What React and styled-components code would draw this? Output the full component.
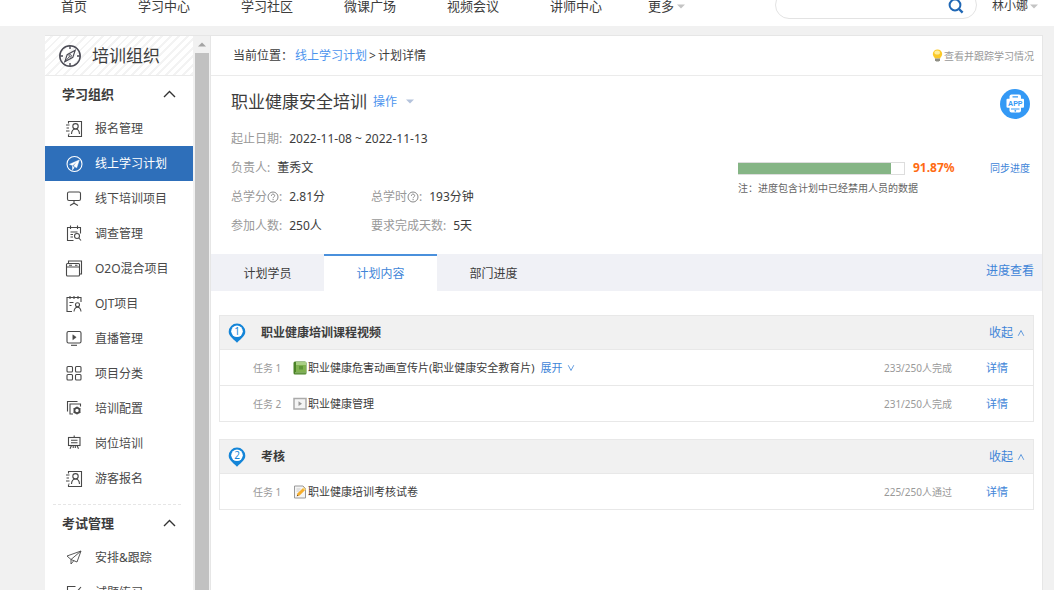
import React, { useState } from "react";
import styled, { createGlobalStyle, css } from "styled-components";

const GlobalStyle = createGlobalStyle`
  * {
    box-sizing: border-box;
  }

  body {
    margin: 0;
    background: #f1f1f1;
    color: #3c3c3c;
    font-family: "Noto Sans", "Noto Sans CJK SC", sans-serif;
    font-size: 12px;
    line-height: 20px;
  }

  ul,
  h1,
  h2,
  h3,
  p,
  dl,
  dd {
    margin: 0;
    padding: 0;
    list-style: none;
  }

  button {
    padding: 0;
    border: 0;
    background: none;
    color: inherit;
    font: inherit;
    cursor: pointer;
  }

  a {
    color: inherit;
    text-decoration: none;
  }

  svg {
    display: block;
    flex: none;
  }
`;

const Page = styled.div`
  display: flex;
  flex-direction: column;
  height: 100vh;
  overflow: hidden;
`;

/* 상단 메뉴 */
const Header = styled.header`
  display: flex;
  align-items: center;
  flex: none;
  height: 66px;
  margin-top: -40px;
  padding: 26px 16px 0 61px;

  background: #fff;
`;

const Nav = styled.nav`
  display: flex;
  gap: 51px;

  font-size: 13px;
  line-height: 14px;
  white-space: nowrap;
`;

const MoreButton = styled.button`
  display: flex;
  align-items: center;
  gap: 3px;
  margin-left: -5px;
`;

const SearchForm = styled.form`
  display: flex;
  align-items: center;
  width: 202px;
  height: 28px;
  margin: 0 15px 2px auto;
  padding: 0 12px 0 14px;

  border: 1px solid #e3e3e3;
  border-radius: 14px;
`;

const SearchInput = styled.input`
  flex: 1;
  min-width: 0;

  border: 0;
  outline: none;
  font: inherit;
`;

const UserButton = styled.button`
  display: flex;
  align-items: center;
  gap: 2px;

  line-height: 14px;
`;

const Body = styled.div`
  display: flex;
  flex: 1;
  min-height: 0;
  margin: 9px 11px 0 45px;

  border-top: 1px solid #e6e6e6;
`;

/* 왼쪽 메뉴 */
const Sidebar = styled.aside`
  flex: none;
  width: 148px;
  overflow: hidden;

  background: #fff;
`;

const SidebarHead = styled.h2`
  display: flex;
  align-items: center;
  gap: 10px;
  height: 40px;
  padding-left: 13px;

  border-bottom: 1px solid #ebebeb;
  background: repeating-linear-gradient(
    135deg,
    #fff 0 4px,
    #f3f3f3 4px 6px
  );
  font-size: 17px;
  font-weight: normal;
`;

const MenuGroup = styled.section`
  padding-bottom: 9px;
`;

const GroupButton = styled.button`
  display: flex;
  align-items: center;
  justify-content: space-between;
  width: 100%;
  height: 35px;
  padding: 0 17px;

  font-size: 13px;
  font-weight: bold;
`;

const Divider = styled.hr`
  height: 0;
  margin: -1px 12px 0 8px;

  border: 0;
  border-top: 1px dashed #e6e6e6;
`;

const MenuLink = styled.a`
  display: flex;
  align-items: center;
  gap: 12px;
  height: 35px;
  padding-left: 20px;

  color: #484848;

  ${({ $active }) =>
    $active &&
    css`
      background: #2e6fba;
      color: #fff;
    `}
`;

const ScrollTrack = styled.div`
  display: flex;
  flex-direction: column;
  flex: none;
  width: 17px;
  padding: 0 1px 0 2px;

  background: #f1f1f1;
`;

const ScrollArrow = styled.div`
  display: flex;
  align-items: center;
  justify-content: center;
  height: 17px;
`;

const ScrollThumb = styled.div`
  flex: 1;

  background: #c1c1c1;
`;

/* 본문 */
const Main = styled.main`
  flex: 1;
  min-width: 0;

  border: solid #e6e6e6;
  border-width: 0 1px;
  background: #fff;
`;

const Breadcrumb = styled.div`
  display: flex;
  align-items: center;
  justify-content: space-between;
  height: 40px;
  padding: 0 8px 0 22px;

  border-bottom: 1px solid #ebebeb;
`;

const Crumbs = styled.nav`
  display: flex;
  gap: 2px;
`;

const TrackLink = styled.a`
  display: flex;
  align-items: center;
  gap: 1px;

  color: #999;
  font-size: 10px;
`;

const BlueLink = styled.a`
  color: ${({ $light }) => ($light ? "#4c94ee" : "#3f85d8")};
  font-size: ${({ $size }) => $size || 12}px;
`;

const Summary = styled.section`
  display: flex;
  padding: 13px 12px 14px 20px;
`;

const Info = styled.div`
  flex: 1;
`;

const TitleRow = styled.div`
  display: flex;
  align-items: center;
  gap: 6px;
  height: 25px;
  margin-bottom: 10px;
`;

const Title = styled.h1`
  font-size: 17px;
  font-weight: normal;
`;

const ActionButton = styled.button`
  display: flex;
  align-items: center;
  gap: 9px;

  color: #4c94ee;
`;

const InfoList = styled.dl`
  display: grid;
  grid-template-columns: 140px auto;
  grid-auto-rows: 29px;
  align-items: center;
`;

const InfoItem = styled.div`
  display: flex;
  gap: 7px;
  grid-column: ${({ $wide }) => ($wide ? "1 / -1" : "auto")};

  white-space: nowrap;
`;

const InfoLabel = styled.dt`
  display: flex;
  align-items: center;

  color: #999;
`;

const Status = styled.div`
  display: flex;
  flex-direction: column;
  width: 292px;
`;

const AppButton = styled.button`
  align-self: flex-end;
  width: 30px;
  height: 30px;
  margin-bottom: 39px;
`;

const ProgressRow = styled.div`
  display: flex;
  align-items: center;
  height: 20px;
`;

const ProgressBar = styled.div`
  width: 167px;
  height: 13px;
  margin-right: 8px;

  border: 1px solid #ddd;
  border-left: 0;
`;

const ProgressFill = styled.div`
  height: 11px;

  background: #85b585;
`;

const Percent = styled.strong`
  flex: 1;

  color: #ff6b12;
  font-size: 12px;
`;

const Note = styled.p`
  color: #666;
  font-size: 10px;
`;

const TabBar = styled.div`
  display: flex;
  align-items: stretch;
  height: 37px;
  padding-right: 8px;

  background: #f0f1f6;
`;

const Tab = styled.button`
  width: 113px;

  border-top: 2px solid transparent;

  ${({ $active }) =>
    $active &&
    css`
      border-top-color: #4a90dc;
      background: #fff;
      color: #3f85d8;
    `}
`;

const TabExtra = styled.div`
  margin: 7px 0 0 auto;
`;

const Chapters = styled.div`
  display: flex;
  flex-direction: column;
  gap: 17px;
  padding: 24px 8px 24px;
`;

const Chapter = styled.section`
  border: 1px solid #e8e8e8;
`;

const ChapterHead = styled.div`
  display: flex;
  align-items: center;
  height: 33px;
  padding: 0 8px;

  background: #f1f1f1;
`;

const ChapterTitle = styled.h3`
  flex: 1;
  margin-left: 15px;

  font-size: 12px;
`;

const FoldButton = styled.button`
  display: flex;
  align-items: center;
  gap: 4px;

  color: #3f85d8;
  font-size: ${({ $small }) => ($small ? 11 : 12)}px;
`;

const Task = styled.li`
  display: flex;
  align-items: center;
  height: 36px;
  padding: 0 25px 0 33px;

  border-top: 1px solid #e8e8e8;
  font-size: 11px;
`;

const TaskNo = styled.span`
  width: 40px;

  color: #999;
  font-size: 10px;
`;

const TaskName = styled.span`
  display: flex;
  align-items: center;
  gap: 1px;
  margin-right: 6px;
`;

const TaskCount = styled.span`
  margin: 0 34px 0 auto;

  color: #999;
  font-size: 10px;
`;

const Caret = ({ color = "#c4c4c4", up }) => (
  <svg width="8" height="5" viewBox="0 0 8 5" fill={color}>
    <path d={up ? "M0 4.5L4 .5l4 4z" : "M0 .5h8l-4 4z"} />
  </svg>
);

const Chevron = ({ up, size = 8 }) => (
  <svg
    width={size}
    height={size}
    viewBox="0 0 8 8"
    fill="none"
    stroke="currentColor"
  >
    <path d={up ? "M1.2 6.8L4 1.5l2.8 5.3" : "M1.2 1.2L4 6.5l2.8-5.3"} strokeWidth=".8" />
  </svg>
);

const GroupArrow = ({ up }) => (
  <svg width="13" height="8" viewBox="0 0 13 8" fill="none" stroke="#333">
    <path d={up ? "M1 7l5.5-5.5L12 7" : "M1 1l5.5 5.5L12 1"} strokeWidth="1.4" />
  </svg>
);

const SearchIcon = () => (
  <svg width="16" height="17" viewBox="0 0 16 17" fill="none" stroke="#1f67b5">
    <circle cx="7" cy="8" r="5.4" strokeWidth="2" />
    <path d="M11 12l3.6 3.6" strokeWidth="2.4" />
  </svg>
);

const CompassIcon = () => (
  <svg width="24" height="24" viewBox="0 0 24 24" fill="none" stroke="#4b4b55">
    <circle cx="12" cy="12" r="10.2" strokeWidth="1.5" />
    <path d="M12 2v3M12 19v3M2 12h3M19 12h3" strokeWidth="1.4" />
    <path d="M17.2 6.2l-2.4 7.2-8 4.400 2.400-7.200z" strokeWidth="1.2" />
    <path d="M6.8 17.8l4.500-5" />
    <circle cx="12.2" cy="11.8" r="1.2" />
  </svg>
);

const BulbIcon = () => (
  <svg width="11" height="13" viewBox="0 0 11 13">
    <path
      d="M5.5.5A4.7 4.7 0 0 0 .8 5.1c0 2 1.5 2.9 2 4.4h5.4c.5-1.5 2-2.4 2-4.4A4.7 4.7 0 0 0 5.5.5z"
      fill="#fbc928"
    />
    <ellipse cx="5.2" cy="3.6" rx="2.8" ry="2" fill="#ffee9a" />
    <path d="M3 9.5h5v1.8L6.8 12.6H4.2L3 11.3z" fill="#8f8f85" />
  </svg>
);

const HelpIcon = () => (
  <svg width="12" height="12" viewBox="0 0 12 12" fill="none" stroke="#888">
    <circle cx="6" cy="6" r="5" />
    <path d="M4.4 4.8c0-2.300 3.300-2.200 3.300-.1 0 1.200-1.600 1.200-1.600 2.500M6.100 8v1.200" />
  </svg>
);

const AppIcon = () => (
  <svg width="30" height="30" viewBox="0 0 30 30">
    <circle cx="15" cy="15" r="15" fill="#3499f5" />
    <rect x="9.5" y="5.500" width="11.500" height="18" rx="2" fill="#fff" />
    <path d="M12.500 7.800h5.500M11 20h8.500" stroke="#3499f5" strokeWidth="1.200" />
    <circle cx="15.300" cy="21.800" r=".9" fill="#3499f5" />
    <rect x="6.500" y="9.800" width="17.500" height="9" rx="1" fill="#fff" />
    <text
      x="15.300"
      y="17"
      fill="#3499f5"
      fontFamily="Liberation Sans"
      fontSize="7"
      fontWeight="bold"
      textAnchor="middle"
    >
      APP
    </text>
  </svg>
);

const Pin = ({ no }) => (
  <svg width="18" height="20" viewBox="0 0 18 20">
    <path
      d="M9 .5a8.300 8.300 0 0 0-8.300 8.300c0 4.200 3.600 6.400 8.300 10.900 4.700-4.500 8.300-6.700 8.300-10.900A8.300 8.300 0 0 0 9 .5z"
      fill="#1485d8"
    />
    <circle cx="9" cy="8.300" r="5.800" fill="#fff" />
    <text
      x="9"
      y="12"
      fill="#1485d8"
      fontFamily="Noto Sans"
      fontSize="10"
      textAnchor="middle"
    >
      {no}
    </text>
  </svg>
);

const BookIcon = () => (
  <svg width="14" height="14" viewBox="0 0 14 14">
    <rect x=".5" y=".5" width="13" height="13" rx="1.500" fill="#4a8226" />
    <path d="M3 1h10v10H3z" fill="#7fb14f" />
    <path d="M2 11.800h11" stroke="#b9d79b" strokeWidth=".7" />
    <path d="M3 1h10v3H3z" fill="#a9cf85" />
    <rect x="6" y="5" width="4" height="3.500" fill="#5f9638" />
  </svg>
);

const VideoIcon = () => (
  <svg width="14" height="14" viewBox="0 0 14 14">
    <rect x="1" y="1.500" width="12" height="10.500" fill="#f4f4f4" stroke="#aaa" strokeWidth="1.500" />
    <path d="M5.500 4.300l3.500 2.400-3.500 2.400z" fill="#999" />
  </svg>
);

const PaperIcon = () => (
  <svg width="14" height="14" viewBox="0 0 14 14">
    <path d="M1.500 1h8.500l2.500 2.500V13h-11z" fill="#f5f5f5" stroke="#999" />
    <path d="M3.500 4h4M3.500 6h3" stroke="#ccc" />
    <path d="M3.800 11.200l.8-2.900 6-5.800 2 2.100-6 5.800z" fill="#f6ae2d" />
    <path d="M9.600 3.500l1.300-1.200 2 2.100-1.300 1.200z" fill="#f9d67c" />
    <path d="M3.800 11.200l.5-1.700 1.200 1.200z" fill="#6b4a2a" />
  </svg>
);

const taskIcons = {
  book: <BookIcon />,
  video: <VideoIcon />,
  paper: <PaperIcon />,
};

const contact = (
  <>
    <path d="M3.500 3.500V1.500h13v15h-13v-2" />
    <path d="M1 5h3.500M1.500 8h2.500M1 11h3.500M3.500 14h1" />
    <circle cx="10.500" cy="6.300" r="2.700" />
    <path d="M6.500 14c.2-3 1.800-5 4-5s3.800 2 4 5" />
  </>
);

const menuIcons = {
  contact,
  plan: (
    <>
      <circle cx="9.500" cy="9" r="7.500" />
      <path d="M14.300 5L4.500 9.300l3.100 1.200 4.300-3.700-3.200 4.300 3 1.700z" fill="currentColor" strokeWidth=".5" />
      <path d="M7.800 11v3l1.300-1.800" />
    </>
  ),
  board: (
    <>
      <rect x="2.500" y="2" width="13" height="8.500" rx="1.500" />
      <path d="M9 10.500v3M5 15.500l4-2.300 4 2.300" />
    </>
  ),
  survey: (
    <>
      <path d="M15.500 8.500V2.500h-13v13h6M5.500 .5v3.500M12.500 .5v3.500M5.500 7h7M5.500 9.500h2.500M5.500 12h2.500" />
      <circle cx="12" cy="11" r="2.500" />
      <path d="M13.800 13l2.200 2.500" />
    </>
  ),
  windows: (
    <>
      <rect x="1.500" y="3.500" width="13" height="12.500" rx="1" />
      <path d="M1.500 7h13M3.500 3.500v-2.500h13v13h-2M4 5.200h3M10 5.200h2.500" />
    </>
  ),
  ojt: (
    <>
      <path d="M7 16.500H2v-14h14V7M5 1v3M9 1v3M13 1v3M4.500 7.500h4M4.500 10.500h2" />
      <circle cx="12.500" cy="9.800" r="2" />
      <path d="M9 16.500c.3-2.700 1.500-4.200 3.500-4.200s3.200 1.500 3.500 4.200" />
    </>
  ),
  live: (
    <>
      <rect x="2" y="1.500" width="14" height="11.500" rx="1.500" />
      <path d="M7.800 4.800l3.400 2.500-3.400 2.500z" fill="currentColor" strokeWidth=".5" />
      <path d="M6 15.300h6" />
    </>
  ),
  grid: (
    <>
      <rect x="2" y="1.500" width="5.500" height="5.500" rx="1" />
      <rect x="10.500" y="1.500" width="5.500" height="5.500" rx="1" />
      <rect x="2" y="9.500" width="5.500" height="5.500" rx="1" />
      <rect x="10.500" y="9.500" width="5.500" height="5.500" rx="1" />
    </>
  ),
  config: (
    <>
      <path d="M2.500 11.500v-10h10M8 14H5V4h10.500V6.500" />
      <circle cx="12" cy="10.500" r="2.600" strokeWidth="1.800" />
      <path d="M12 6.500v1.500M12 13v1.500M8.500 8.500l1.300.8M14.200 11.700l1.300.8M8.500 12.500l1.300-.8M14.200 9.300l1.300-.8" />
    </>
  ),
  post: (
    <>
      <rect x="3.500" y="2.500" width="11.500" height="8" />
      <path d="M9.200 .5v2M6 5.300h6.500M6 7.800h6.500M6.500 10.500L5 13.800M12 10.500l1.500 3.300M8.200 10.500v2.500M10.300 10.500v2.500" />
    </>
  ),
  plane: (
    <path d="M16 2L2 7l4 3.500L16 2l-4 11-6-2.500M6 10.500V15l2.800-3.300" strokeWidth=".9" />
  ),
  edit: (
    <path d="M15.500 8v8.500h-13v-14h8M6 8l3 3 7-8" />
  ),
};

const MenuIcon = ({ name }) => (
  <svg
    width="18"
    height="18"
    viewBox="0 0 18 18"
    fill="none"
    stroke="currentColor"
    strokeWidth="1.1"
  >
    {menuIcons[name]}
  </svg>
);

const navList = ["首页", "学习中心", "学习社区", "微课广场", "视频会议", "讲师中心"];

const menuGroups = [
  {
    id: 1,
    name: "学习组织",
    items: [
      { icon: "contact", name: "报名管理" },
      { icon: "plan", name: "线上学习计划" },
      { icon: "board", name: "线下培训项目" },
      { icon: "survey", name: "调查管理" },
      { icon: "windows", name: "O2O混合项目" },
      { icon: "ojt", name: "OJT项目" },
      { icon: "live", name: "直播管理" },
      { icon: "grid", name: "项目分类" },
      { icon: "config", name: "培训配置" },
      { icon: "post", name: "岗位培训" },
      { icon: "contact", name: "游客报名" },
    ],
  },
  {
    id: 2,
    name: "考试管理",
    items: [
      { icon: "plane", name: "安排&跟踪" },
      { icon: "edit", name: "试题练习" },
    ],
  },
];

const infoList = [
  { label: "起止日期", value: "2022-11-08 ~ 2022-11-13", wide: true },
  { label: "负责人", value: "董秀文", wide: true },
  { label: "总学分", value: "2.81分", help: true },
  { label: "总学时", value: "193分钟", help: true },
  { label: "参加人数", value: "250人" },
  { label: "要求完成天数", value: "5天" },
];

const chapterList = [
  {
    id: 1,
    title: "职业健康培训课程视频",
    tasks: [
      {
        icon: "book",
        name: "职业健康危害动画宣传片(职业健康安全教育片)",
        count: "233/250人完成",
        expandable: true,
      },
      { icon: "video", name: "职业健康管理", count: "231/250人完成" },
    ],
  },
  {
    id: 2,
    title: "考核",
    tasks: [
      { icon: "paper", name: "职业健康培训考核试卷", count: "225/250人通过" },
    ],
  },
];

const TopBar = () => {
  const [keyword, setKeyword] = useState("");

  return (
    <Header>
      <Nav>
        {navList.map((name) => (
          <a href="#" key={name}>
            {name}
          </a>
        ))}
        <MoreButton>
          更多
          <Caret />
        </MoreButton>
      </Nav>
      <SearchForm onSubmit={(e) => e.preventDefault()}>
        <SearchInput
          aria-label="搜索"
          value={keyword}
          onChange={({ target }) => setKeyword(target.value)}
        />
        <button aria-label="搜索">
          <SearchIcon />
        </button>
      </SearchForm>
      <UserButton>
        林小娜
        <Caret />
      </UserButton>
    </Header>
  );
};

const Group = ({ group, current, onSelect }) => {
  const [open, setOpen] = useState(true);

  return (
    <MenuGroup>
      <GroupButton aria-expanded={open} onClick={() => setOpen(!open)}>
        {group.name}
        <GroupArrow up={open} />
      </GroupButton>
      {open &&
        group.items.map(({ icon, name }) => (
          <MenuLink
            href="#"
            key={name}
            $active={name === current}
            onClick={() => onSelect(name)}
          >
            <MenuIcon name={icon} />
            {name}
          </MenuLink>
        ))}
    </MenuGroup>
  );
};

const SideMenu = () => {
  const [current, setCurrent] = useState("线上学习计划");

  return (
    <>
      <Sidebar>
        <SidebarHead>
          <CompassIcon />
          培训组织
        </SidebarHead>
        {menuGroups.map((group, i) => (
          <React.Fragment key={group.id}>
            {i > 0 && <Divider />}
            <Group group={group} current={current} onSelect={setCurrent} />
          </React.Fragment>
        ))}
      </Sidebar>
      <ScrollTrack>
        <ScrollArrow>
          <Caret color="#a3a3a3" up />
        </ScrollArrow>
        <ScrollThumb />
      </ScrollTrack>
    </>
  );
};

const PlanSummary = () => {
  const progress = 91.87;

  return (
    <Summary>
      <Info>
        <TitleRow>
          <Title>职业健康安全培训</Title>
          <ActionButton>
            操作
            <Caret color="#b4c3dc" />
          </ActionButton>
        </TitleRow>
        <InfoList>
          {infoList.map(({ label, value, help, wide }) => (
            <InfoItem key={label} $wide={wide}>
              <InfoLabel>
                {label}
                {help && <HelpIcon />}:
              </InfoLabel>
              <dd>{value}</dd>
            </InfoItem>
          ))}
        </InfoList>
      </Info>
      <Status>
        <AppButton aria-label="APP">
          <AppIcon />
        </AppButton>
        <ProgressRow>
          <ProgressBar>
            <ProgressFill style={{ width: `${progress}%` }} />
          </ProgressBar>
          <Percent>{progress}%</Percent>
          <BlueLink href="#" $size={10}>
            同步进度
          </BlueLink>
        </ProgressRow>
        <Note>注：进度包含计划中已经禁用人员的数据</Note>
      </Status>
    </Summary>
  );
};

const ChapterBox = ({ chapter }) => {
  const [open, setOpen] = useState(true);

  return (
    <Chapter>
      <ChapterHead>
        <Pin no={chapter.id} />
        <ChapterTitle>{chapter.title}</ChapterTitle>
        <FoldButton onClick={() => setOpen(!open)}>
          {open ? "收起" : "展开"}
          <Chevron up={open} />
        </FoldButton>
      </ChapterHead>
      {open && (
        <ul>
          {chapter.tasks.map(({ icon, name, count, expandable }, i) => (
            <Task key={name}>
              <TaskNo>任务 {i + 1}</TaskNo>
              <TaskName>
                {taskIcons[icon]}
                {name}
              </TaskName>
              {expandable && (
                <FoldButton $small>
                  展开
                  <Chevron />
                </FoldButton>
              )}
              <TaskCount>{count}</TaskCount>
              <BlueLink href="#" $size={11}>
                详情
              </BlueLink>
            </Task>
          ))}
        </ul>
      )}
    </Chapter>
  );
};

const App = () => {
  const [tab, setTab] = useState("计划内容");

  return (
    <Page>
      <GlobalStyle />
      <TopBar />
      <Body>
        <SideMenu />
        <Main>
          <Breadcrumb>
            <Crumbs>
              <span>当前位置：</span>
              <BlueLink href="#" $light>
                线上学习计划
              </BlueLink>
              <span>&gt;</span>
              <span>计划详情</span>
            </Crumbs>
            <TrackLink href="#">
              <BulbIcon />
              查看并跟踪学习情况
            </TrackLink>
          </Breadcrumb>
          <PlanSummary />
          <TabBar>
            {["计划学员", "计划内容", "部门进度"].map((name) => (
              <Tab key={name} $active={name === tab} onClick={() => setTab(name)}>
                {name}
              </Tab>
            ))}
            <TabExtra>
              <BlueLink href="#">进度查看</BlueLink>
            </TabExtra>
          </TabBar>
          <Chapters>
            {chapterList.map((chapter) => (
              <ChapterBox key={chapter.id} chapter={chapter} />
            ))}
          </Chapters>
        </Main>
      </Body>
    </Page>
  );
};

export default App;
